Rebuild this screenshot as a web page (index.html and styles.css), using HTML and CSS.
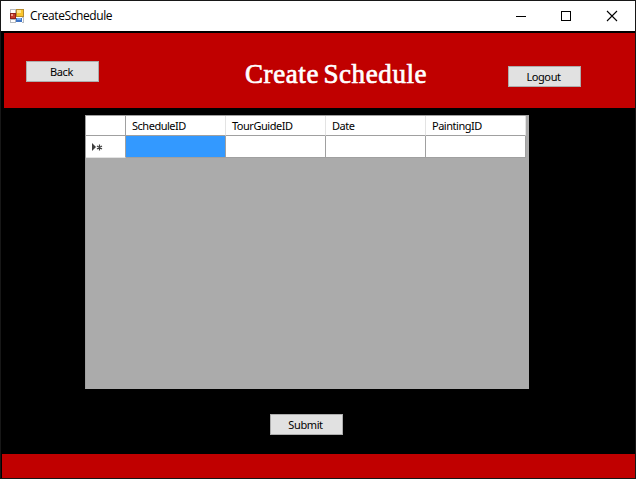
FILE: index.html
```
<!DOCTYPE html>
<html lang="en">
<head>
<meta charset="utf-8">
<title>CreateSchedule</title>
<link rel="stylesheet" href="styles.css">
</head>
<body>
<div class="window">
  <header class="titlebar">
    <svg class="app-icon" width="14" height="14" viewBox="0 0 14 14" shape-rendering="crispEdges">
      <path fill="#b9bcc0" d="M0 0h6v4H0zM0 10h6v4H0zM12 8h2v6h-2z"/>
      <path fill="#fff" d="M1 1h4v3H1zM1 11h4v2H1zM12 9h1v4h-1z"/>
      <path fill="#b88b2c" d="M6 0h8v8H6z"/>
      <path fill="#f9c52e" d="M7 1h6v6H7z"/>
      <path fill="#ffe48a" d="M7 1h4v3H7z"/>
      <path fill="#8e2119" d="M0 4h6v6H0z"/>
      <path fill="#c63b2b" d="M1 5h4v4H1z"/>
      <path fill="#ef9a86" d="M1 5h2v2H1z"/>
      <path fill="#3f74c5" d="M6 9h6v4H6z"/>
      <path fill="#76adf0" d="M7 9h4v2H7z"/>
    </svg>
    <span class="caption">CreateSchedule</span>
    <svg class="controls" width="103" height="12" viewBox="0 0 103 12" fill="none" stroke="#000">
      <path d="M0 6.500h10M45.500 1.500h9v9h-9z" shape-rendering="crispEdges"/>
      <path d="M91 1l10 10M101 1L91 11" stroke-width="1.100"/>
    </svg>
  </header>
  <main class="client">
    <section class="banner">
      <button class="button back">Back</button>
      <h1 class="heading">Create Schedule</h1>
      <button class="button logout">Logout</button>
    </section>
    <section class="grid">
      <div class="row head">
        <span></span><span>ScheduleID</span><span>TourGuideID</span><span>Date</span><span>PaintingID</span>
      </div>
      <div class="row record">
        <span class="marker"><svg width="12" height="9" viewBox="0 0 12 9"><path fill="#404040" d="M0 0v8l4-4z"/><path stroke="#404040" stroke-width="1.200" d="M7.500 1.500v6M5 3l5 3M5 6l5-3"/></svg></span>
        <span class="selected"></span><span></span><span></span><span></span>
      </div>
    </section>
    <button class="button submit">Submit</button>
    <footer class="footer"></footer>
  </main>
</div>
</body>
</html>
```
FILE: styles.css
```
* { box-sizing: border-box; }
body { margin: 0; background: #000; color: #000; }
.window {
  width: 636px;
  height: 479px;
  border: 1px solid #171717;
  display: flex;
  flex-direction: column;
  background: #000;
  overflow: hidden;
}
.titlebar {
  height: 30px;
  flex: none;
  background: #fff;
  display: flex;
  align-items: center;
  padding-left: 9px;
}
.caption {
  margin-left: 6px;
  font: 12px/16px "Open Sans", sans-serif;
  letter-spacing: -0.4px;
}
.controls { margin-left: auto; margin-right: 16px; }
.client {
  flex: 1;
  display: flex;
  flex-direction: column;
  padding: 2px 0 0 1px;
}
.banner {
  height: 75px;
  flex: none;
  margin-left: 2px;
  padding-left: 22px;
  background: #c00000;
  display: flex;
  align-items: flex-start;
}
.button {
  width: 73px;
  height: 21px;
  flex: none;
  padding: 1px 2px 0 0;
  border: 1px solid #adadad;
  border-radius: 0;
  background: #e1e1e1;
  color: #000;
  font: 11px/18px "Noto Sans", sans-serif;
  letter-spacing: -0.4px;
}
.back { margin-top: 28px; }
.heading {
  margin: 25px 0 0 146px;
  width: 184px;
  color: #fff;
  font: 27px/32px "Liberation Serif", serif;
  letter-spacing: 0.6px;
  word-spacing: -3px;
  white-space: nowrap;
  -webkit-text-stroke: 0.7px #fff;
}
.logout { margin: 33px 0 0 79px; }
.grid {
  width: 444px;
  height: 274px;
  flex: none;
  margin: 7px 0 0 83px;
  border: 1px solid #a0a0a0;
  border-color: #a0a0a0 #ababab #ababab #a0a0a0;
  background: #ababab;
}
.row {
  display: grid;
  grid-template-columns: 40px repeat(4, 100px);
  width: 440px;
}
.row span {
  border-right: 1px solid #a0a0a0;
  border-bottom: 1px solid #a0a0a0;
  background: #fff;
}
.head span {
  height: 20px;
  padding-left: 6px;
  border-right-color: #e3e3e3;
  font: 11px/19px "Noto Sans", sans-serif;
  letter-spacing: -0.48px;
}
.head span:first-child { border-right-color: #a0a0a0; }
.record span { height: 22px; }
.row .marker {
  display: flex;
  align-items: center;
  padding: 2px 0 0 6px;
  border-bottom-color: #e3e3e3;
}
.row .selected { background: #3399ff; }
.submit { margin: 25px 0 0 268px; }
.footer {
  height: 24px;
  flex: none;
  margin-top: auto;
  background: #c00000;
}
```
